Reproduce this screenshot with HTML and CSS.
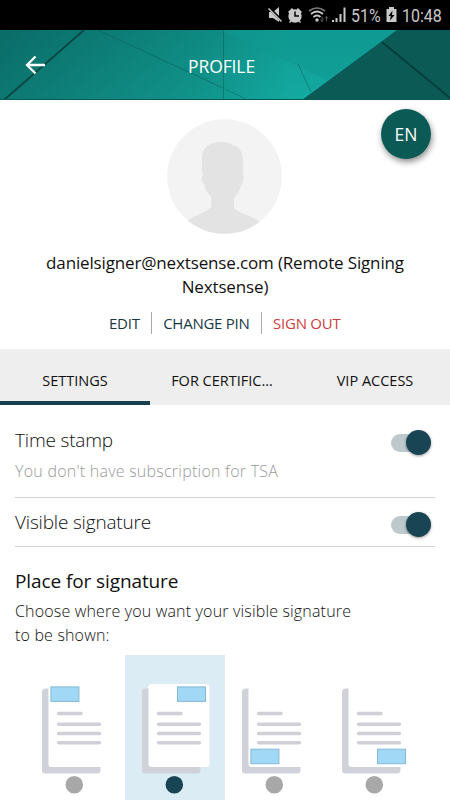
FILE: index.html
```html
<!DOCTYPE html>
<html lang="en">
<head>
  <meta charset="UTF-8">
  <meta name="viewport" content="width=device-width, initial-scale=1.0">
  <title>Profile</title>
  <link rel="stylesheet" href="styles.css">
</head>
<body>
  <!-- Status bar -->
  <div class="status">
    <svg class="status-icons" width="82" height="30" viewBox="0 0 82 30">
      <g fill="#c9c9c9">
        <path d="M1 12h4l6-5v15l-6-4H1z"/>
        <circle cx="27" cy="16" r="6.7"/>
        <path d="M20 12l4-4 1.500 1.500-4 4zM34 12l-4-4-1.500 1.500 4 4zM21 22l2-2 1 1-2 2zM33 22l-2-2-1 1 2 2z"/>
        <path d="M64 22v-2h2v2zM67.500 22v-4h2v4zM71.500 22v-8h2v8zM75.500 22V7.500h2V22z"/>
        <circle cx="49" cy="20" r="1.700"/>
      </g>
      <path d="M1 8l13 13" stroke="#000" stroke-width="3"/>
      <path d="M0.500 8.500l13 13" stroke="#c9c9c9" stroke-width="1.500"/>
      <path d="M27 11.500V16h4" fill="none" stroke="#000" stroke-width="1.500"/>
      <path d="M45.500 17q3.500-3 7 0M43 14q6-5 12 0" fill="none" stroke="#c9c9c9" stroke-width="1.700"/>
      <path d="M41 11q8-6 16 0" fill="none" stroke="#777" stroke-width="1.700"/>
      <path d="M54 16.500v5m-1.500-2l1.500 2 1.500-2M58.500 21.500v-5m-1.500 2l1.500-2 1.500 2" fill="none" stroke="#555"/>
    </svg>
    <span class="status-text percent">51%</span>
    <svg class="battery" width="11" height="30" viewBox="0 0 11 30">
      <path d="M3 7h5v2h2.500v13H.500V9H3z" fill="#c9c9c9"/>
      <path d="M6.500 10.500L2.500 16h2.200l-.700 4.500L8.500 15H6z" fill="#000"/>
    </svg>
    <span class="status-text clock">10:48</span>
  </div>

  <!-- Header -->
  <header class="header">
    <svg class="header-bg" width="450" height="70" viewBox="0 0 450 70">
      <defs>
        <linearGradient id="teal" x1="0" y1="0" x2="1" y2="0">
          <stop offset="0" stop-color="#0c706b"/>
          <stop offset=".45" stop-color="#109188"/>
          <stop offset=".65" stop-color="#13a8a0"/>
          <stop offset="1" stop-color="#13a8a0"/>
        </linearGradient>
        <linearGradient id="shade" x1="0" y1="0" x2="0" y2="1">
          <stop offset="0" stop-color="#004b49" stop-opacity=".12"/>
          <stop offset="1" stop-color="#16b0a6" stop-opacity=".12"/>
        </linearGradient>
      </defs>
      <path d="M0 0h450v70H0z" fill="url(#teal)"/>
      <path d="M0 0h450v70H0z" fill="url(#shade)"/>
      <path d="M225 0h172l-70 50-102-48z" fill="#0f9a91" opacity=".6"/>
      <path d="M397 0h53v70H302z" fill="#0b5a55"/>
      <path d="M84 0L4 70" stroke="#064742" stroke-width="1.800"/>
      <path d="M98 0l125 58" stroke="#0a6661" stroke-width=".7"/>
      <path d="M223.500 0v70" stroke="#0a6661" stroke-width="1" opacity=".6"/>
      <path d="M298 34l13 28M225 59l23 11" stroke="#0b7771" stroke-width=".8"/>
      <path d="M382 12l68 56" stroke="#063e3b" stroke-width="1.800"/>
      <path d="M0 69.500h450" stroke="#075b56"/>
    </svg>
    <svg class="back" width="22" height="20" viewBox="0 0 22 20">
      <path d="M20 10H2M10.500 1.500L2 10l8.500 8.500" fill="none" stroke="#fff" stroke-width="2.300"/>
    </svg>
    <h1 class="title">PROFILE</h1>
  </header>

  <!-- Profile -->
  <section class="profile">
    <button class="lang">EN</button>
    <svg class="avatar" width="115" height="115" viewBox="0 0 115 115">
      <defs>
        <clipPath id="round"><circle cx="57.500" cy="57.500" r="57.300"/></clipPath>
      </defs>
      <circle cx="57.500" cy="57.500" r="57.300" fill="#f3f3f3"/>
      <path clip-path="url(#round)" fill="#e3e3e3" d="M36 56c-1-4-1-6-1-18 0-10 8-15 20-15 5 0 8 1 10 3 6 1 11 6 11 15v15c1 2 0 9-2 10-1 5-3 9-7 13v10c4 5 16 7 25 13v21H20V102c8-6 20-9 24-14V78c-4-4-6-8-7-13-2-1-3-7-1-9z"/>
    </svg>
    <p class="user">danielsigner@nextsense.com (Remote Signing Nextsense)</p>
    <nav class="actions">
      <a class="action">EDIT</a>
      <a class="action">CHANGE PIN</a>
      <a class="action sign-out">SIGN OUT</a>
    </nav>
  </section>

  <!-- Tabs -->
  <nav class="tabs">
    <a class="tab active">SETTINGS</a>
    <a class="tab tab-cert">FOR CERTIFIC...</a>
    <a class="tab">VIP ACCESS</a>
  </nav>

  <!-- Settings -->
  <main class="settings">
    <div class="row row-stamp">
      <div>
        <div class="label">Time stamp</div>
        <div class="hint">You don't have subscription for TSA</div>
      </div>
      <div class="switch"><div class="knob"></div></div>
    </div>
    <div class="row row-visible">
      <div class="label">Visible signature</div>
      <div class="switch"><div class="knob"></div></div>
    </div>

    <h2 class="heading">Place for signature</h2>
    <p class="text">Choose where you want your visible signature<br>to be shown:</p>
  </main>

  <svg class="symbols" width="0" height="0">
    <symbol id="page" viewBox="0 0 100 145">
      <rect x="17" y="33.500" width="58.500" height="85" rx="3.500" fill="#d1d1d9"/>
      <rect x="23.500" y="29" width="61" height="83" rx="3" fill="#fff"/>
      <path d="M33.500 58.500h22.500M33.500 69.300h41M33.500 78.500h41M33.500 87.800h41" stroke="#d0d0d8" stroke-width="3.500" stroke-linecap="round"/>
    </symbol>
  </svg>
  <div class="places">
    <div class="place">
      <svg width="100" height="145"><use href="#page"/><rect class="mark" x="25.900" y="31.900" width="28" height="14.500"/><circle cx="49.300" cy="129.700" r="8.800"/></svg>
    </div>
    <div class="place selected">
      <svg width="100" height="145"><use href="#page"/><rect class="mark" x="52.500" y="31.900" width="28" height="14.500"/><circle cx="49.300" cy="129.700" r="8.800"/></svg>
    </div>
    <div class="place">
      <svg width="100" height="145"><use href="#page"/><rect class="mark" x="25.900" y="94.200" width="28" height="14.500"/><circle cx="49.300" cy="129.700" r="8.800"/></svg>
    </div>
    <div class="place">
      <svg width="100" height="145"><use href="#page"/><rect class="mark" x="52.500" y="94.200" width="28" height="14.500"/><circle cx="49.300" cy="129.700" r="8.800"/></svg>
    </div>
  </div>
</body>
</html>
```
FILE: styles.css
```css
* {
  box-sizing: border-box;
}

body {
  margin: 0;
  width: 450px;
  height: 800px;
  overflow: hidden;
  background: #fff;
  color: #111;
  font-family: "Open Sans", "Noto Sans", sans-serif;
}

h1, h2, p {
  margin: 0;
  font-weight: 400;
}

svg {
  display: block;
}

/* status bar */
.status {
  display: flex;
  height: 30px;
  padding-left: 268px;
  background: #000;
  color: #c9c9c9;
}

.status-text {
  font: 19px/32px Roboto, sans-serif;
  white-space: nowrap;
  transform: scaleX(.84);
  transform-origin: left;
}

.percent {
  width: 35px;
  margin-left: 1px;
}

.clock {
  margin-left: 5px;
}

/* header */
.header {
  display: grid;
  grid-template-columns: 164px 1fr;
  align-items: center;
  height: 70px;
  position: relative;
  color: #fff;
}

.header-bg {
  position: absolute;
  inset: 0;
  z-index: -1;
}

.back {
  margin-left: 25px;
}

.title {
  margin: 1px 0 0 24px;
  font-size: 17.500px;
  line-height: 24px;
  letter-spacing: -.1px;
}

/* profile */
.profile {
  position: relative;
  height: 249px;
  padding-top: 19px;
  text-align: center;
}

.avatar {
  margin-left: 167px;
}

.lang {
  position: absolute;
  top: 9px;
  right: 19px;
  width: 50px;
  height: 50px;
  padding: 0;
  border: 0;
  border-radius: 50%;
  background: #0c5a55;
  box-shadow: 1px 3px 6px rgba(0, 0, 0, .45);
  color: #fff;
  font: 17.500px "Open Sans", sans-serif;
}

.user {
  padding: 0 40px;
  margin-top: 17px;
  font-size: 17px;
  line-height: 23.500px;
  letter-spacing: -.15px;
}

.actions {
  display: flex;
  justify-content: center;
  margin-top: 14px;
  font-size: 15px;
  line-height: 22px;
  letter-spacing: -.25px;
  color: #163843;
}

.action {
  padding: 0 11.500px 0 11px;
  border-right: 1px solid #aaa;
}

.sign-out {
  border: 0;
  color: #cf3d3d;
}

/* tabs */
.tabs {
  display: grid;
  grid-template-columns: repeat(3, 1fr);
  height: 56px;
  background: #eee;
  font-size: 14.500px;
  line-height: 63px;
  text-align: center;
}

.tab {
  height: 56px;
}

.tab-cert {
  padding-right: 6px;
}

.active {
  border-bottom: 4px solid #173f4e;
}

/* settings */
.settings {
  height: 250px;
  padding: 0 15px;
  font-weight: 300;
}

.row {
  display: flex;
  justify-content: space-between;
  border-bottom: 1px solid #d2d2d2;
}

.row-stamp {
  height: 93px;
  padding-top: 21px;
}

.row-visible {
  height: 49px;
  padding-top: 10px;
}

.label {
  font-size: 19px;
  line-height: 28px;
  letter-spacing: -.18px;
}

.hint {
  margin-top: 4px;
  font-size: 16px;
  line-height: 26px;
  letter-spacing: .24px;
  color: #999;
}

.switch {
  width: 36px;
  height: 18px;
  margin: 8px 8px 0 0;
  border-radius: 9px;
  background: #bdc9cd;
}

.knob {
  width: 25px;
  height: 25px;
  margin: -4px 0 0 14.500px;
  border-radius: 50%;
  background: #184453;
  box-shadow: 0 1px 3px rgba(0, 0, 0, .4);
}

.heading {
  margin-top: 20px;
  font-size: 19px;
  line-height: 28px;
  letter-spacing: -.1px;
}

.text {
  margin-top: 5px;
  font-size: 16px;
  font-weight: 300;
  line-height: 23.500px;
  letter-spacing: .17px;
}

/* signature places */
.symbols {
  position: absolute;
}

.places {
  display: grid;
  grid-template-columns: repeat(4, 100px);
  padding-left: 25px;
}

.place {
  height: 145px;
  fill: #a8a8a8;
}

.selected {
  background: #dcecf4;
  fill: #184453;
}

.mark {
  fill: #a0d8f6;
  stroke: #83b9d3;
}
```
